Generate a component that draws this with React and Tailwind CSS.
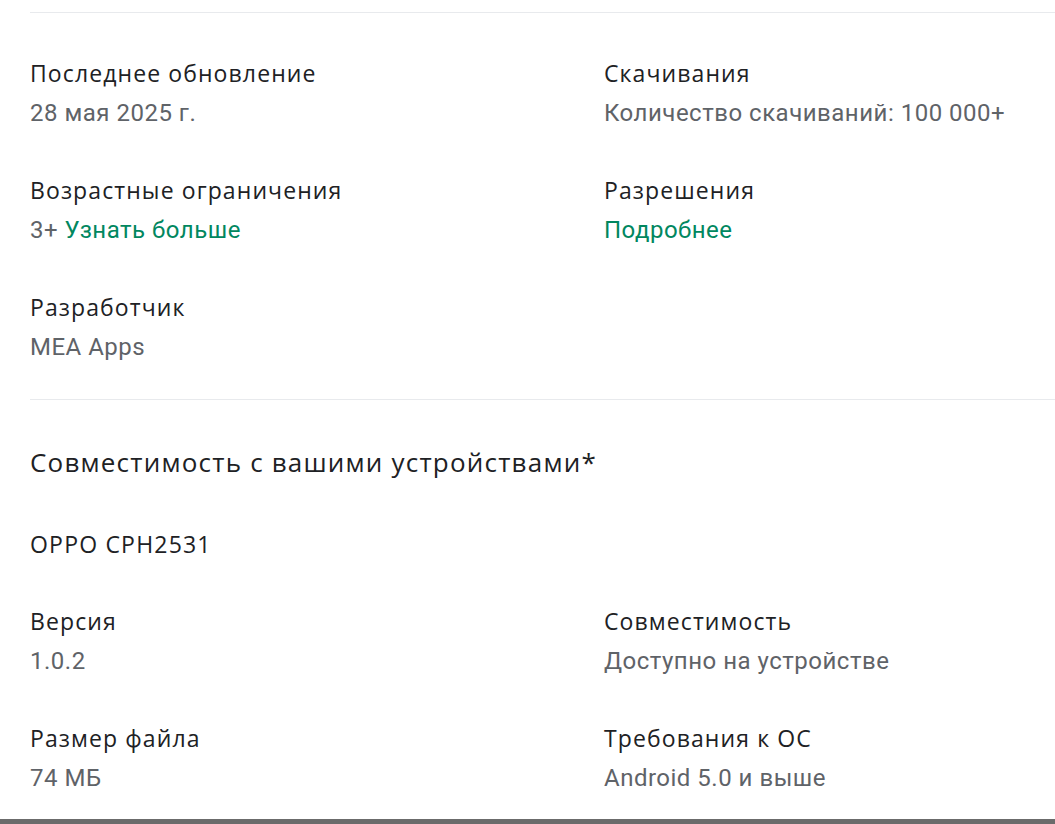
import React from "react";

const Item = ({ label, children }) => (
  <div>
    <div className="text-[23px] leading-[28px] tracking-[1.1px] text-[#202124]" style={{ fontFamily: '"Open Sans", sans-serif' }}>
      {label}
    </div>
    <div className="mt-[12px] text-[24px] leading-[28px] tracking-[0.5px] text-[#5f6368]" style={{ fontFamily: "Roboto, sans-serif" }}>
      {children}
    </div>
  </div>
);

const Link = ({ children }) => <span className="text-[#01875f]">{children}</span>;

export default function App() {
  return (
    <div className="w-[1055px] h-[824px] bg-white overflow-hidden flex flex-col">
      <div className="pl-[30px] flex-1">
        <div className="mt-[12px] h-px bg-[#e8eaed]" />
        <div className="mt-[46px] grid grid-cols-[574px_1fr] gap-y-[49px]">
          <Item label="Последнее обновление">28 мая 2025 г.</Item>
          <Item label="Скачивания">Количество скачиваний: 100 000+</Item>
          <Item label="Возрастные ограничения">
            3+ <Link>Узнать больше</Link>
          </Item>
          <Item label="Разрешения">
            <Link>Подробнее</Link>
          </Item>
          <Item label="Разработчик">MEA Apps</Item>
        </div>
        <div className="mt-[38px] h-px bg-[#e8eaed]" />
        <h2 className="mt-[46px] text-[26px] leading-[32px] tracking-[1.2px] text-[#202124]" style={{ fontFamily: '"Open Sans", sans-serif' }}>
          Совместимость с вашими устройствами*
        </h2>
        <div className="mt-[52px] text-[23px] leading-[28px] tracking-[1.2px] font-medium text-[#202124]" style={{ fontFamily: '"Open Sans", sans-serif' }}>
          OPPO CPH2531
        </div>
        <div className="mt-[49px] grid grid-cols-[574px_1fr] gap-y-[49px]">
          <Item label="Версия">1.0.2</Item>
          <Item label="Совместимость">Доступно на устройстве</Item>
          <Item label="Размер файла">74 МБ</Item>
          <Item label="Требования к ОС">Android 5.0 и выше</Item>
        </div>
      </div>
      <div className="h-[5px] bg-[#6b6b6b]" />
    </div>
  );
}
